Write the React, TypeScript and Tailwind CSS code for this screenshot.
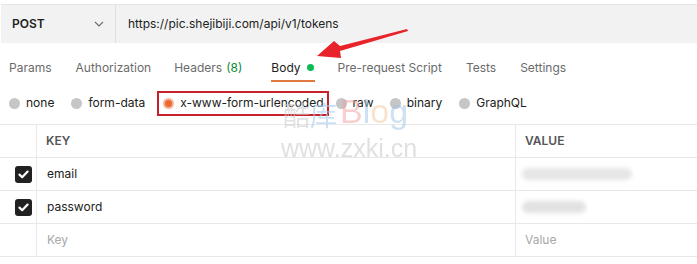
import React from "react";

const Check = () => (
  <div className="w-[17px] h-[17px] rounded-[3px] bg-[#212121] flex items-center justify-center">
    <svg width="11" height="9" viewBox="0 0 11 9">
      <path d="M1.5 4.6 L4.2 7.2 L9.6 1.6" fill="none" stroke="white" strokeWidth="2.2" strokeLinecap="round" strokeLinejoin="round" />
    </svg>
  </div>
);

const Radio = ({ label, active }: { label: string; active?: boolean }) => (
  <div className="flex items-center gap-[6px]">
    {active ? (
      <div className="w-[11px] h-[11px] rounded-full bg-[#f3b49a] flex items-center justify-center">
        <div className="w-[7px] h-[7px] rounded-full bg-[#ef6a2f]" />
      </div>
    ) : (
      <div className="w-[11px] h-[11px] rounded-full bg-[#c6c6c6]" />
    )}
    <span>{label}</span>
  </div>
);

export default function App() {
  return (
    <div
      className="relative w-[697px] h-[264px] bg-white overflow-hidden text-[12px] text-[#212121]"
      style={{ fontFamily: "Inter, 'Noto Sans', 'Noto Sans CJK SC', sans-serif" }}
    >
      <div className="pt-[4px] pl-[1px]">
        <div className="flex h-[39px] bg-[#f2f2f2] border-t border-[#e4e4e4]">
          <div className="w-[115px] flex items-center justify-between pl-[11px] pr-[11px] border-r border-[#e0e0e0]">
            <span className="font-semibold text-[12px] text-[#212121]">POST</span>
            <svg width="10" height="6" viewBox="0 0 10 6">
              <path d="M1 1 L5 5 L9 1" fill="none" stroke="#6b6b6b" strokeWidth="1.1" />
            </svg>
          </div>
          <div className="flex items-center pl-[12px] text-[12px] text-[#212121]">
            https://pic.shejibiji.com/api/v1/tokens
          </div>
        </div>
      </div>

      <div className="flex h-[39px] pl-[9px] pt-[10px] text-[12px] text-[#6b6b6b]">
        <div className="flex items-center mr-[24px]">Params</div>
        <div className="flex items-center mr-[23px]">Authorization</div>
        <div className="flex items-center mr-[29px]">
          Headers <span className="ml-[4px] text-[#0b8a3a]">(8)</span>
        </div>
        <div className="relative flex items-center mr-[24px] text-[#212121]">
          Body
          <span className="ml-[6px] w-[7px] h-[7px] rounded-full bg-[#0cbb52]" />
          <div className="absolute left-0 right-[-1px] bottom-[0px] h-[2px] bg-[#e0793f]" />
        </div>
        <div className="flex items-center mr-[24px]">Pre-request Script</div>
        <div className="flex items-center mr-[24px]">Tests</div>
        <div className="flex items-center">Settings</div>
      </div>

      <div className="flex items-center h-[42px] pl-[9px] text-[12px] text-[#212121]">
        <div className="mr-[17px]"><Radio label="none" /></div>
        <div className="mr-[12px]"><Radio label="form-data" /></div>
        <div className="mr-[7px] h-[25px] flex items-center pl-[4px] pr-[3px] border-2 border-[#c8202a]">
          <Radio label="x-www-form-urlencoded" active />
        </div>
        <div className="mr-[16px]"><Radio label="raw" /></div>
        <div className="mr-[17px]"><Radio label="binary" /></div>
        <div><Radio label="GraphQL" /></div>
      </div>

      <div className="border-t border-[#e8e8e8]">
        <div className="flex h-[33px] border-b border-[#e8e8e8]">
          <div className="w-[37px] border-r border-[#e8e8e8]" />
          <div className="w-[479px] border-r border-[#e8e8e8] flex items-center pl-[9px] font-semibold text-[12px] text-[#555]">KEY</div>
          <div className="flex-1 flex items-center pl-[9px] font-semibold text-[12px] text-[#555]">VALUE</div>
        </div>
        <div className="flex h-[33px] border-b border-[#e8e8e8]">
          <div className="w-[37px] border-r border-[#e8e8e8] flex items-center justify-end pr-[4px]"><Check /></div>
          <div className="w-[479px] border-r border-[#e8e8e8] flex items-center pl-[10px]">email</div>
          <div className="flex-1 flex items-center pl-[6px]">
            <div className="w-[110px] h-[12px] rounded-full bg-[#e6e6e6] blur-[2px]" />
          </div>
        </div>
        <div className="flex h-[33px] border-b border-[#e8e8e8]">
          <div className="w-[37px] border-r border-[#e8e8e8] flex items-center justify-end pr-[4px]"><Check /></div>
          <div className="w-[479px] border-r border-[#e8e8e8] flex items-center pl-[10px]">password</div>
          <div className="flex-1 flex items-center pl-[6px]">
            <div className="w-[64px] h-[12px] rounded-full bg-[#e2e2e2] blur-[2px]" />
          </div>
        </div>
        <div className="flex h-[33px] border-b border-[#e8e8e8]">
          <div className="w-[37px] border-r border-[#e8e8e8]" />
          <div className="w-[479px] border-r border-[#e8e8e8] flex items-center pl-[10px] text-[#a8a8a8]">Key</div>
          <div className="flex-1 flex items-center pl-[9px] text-[#a8a8a8]">Value</div>
        </div>
      </div>

      {/* watermark */}
      <div className="absolute left-[283px] top-[94px] flex items-end leading-none pointer-events-none select-none">
        <span className="text-[27px] text-[#cfcfcf] opacity-60" style={{ fontFamily: "'Noto Sans CJK SC', sans-serif" }}>酷</span>
        <span className="text-[27px] text-[#a9cdee] opacity-60" style={{ fontFamily: "'Noto Sans CJK SC', sans-serif" }}>库</span>
        <span className="ml-[3px] text-[34px] opacity-50" style={{ fontFamily: "'Liberation Sans', sans-serif" }}>
          <span className="text-[#f0a0a0]">B</span>
          <span className="text-[#9cc5e8]">l</span>
          <span className="text-[#f5c9a0]">o</span>
          <span className="text-[#9cc5e8]">g</span>
        </span>
      </div>
      <div
        className="absolute left-[281px] top-[136px] text-[25px] leading-none text-[#d4d4d4] opacity-70 pointer-events-none"
        style={{ fontFamily: "'Liberation Sans', sans-serif" }}
      >
        www.zxki.cn
      </div>

      {/* red arrow */}
      <svg className="absolute left-0 top-0 pointer-events-none" width="697" height="264">
        <path d="M407 29 L340 46 L334 41 L317 56 L341 58 L340 51 L408 31 Z" fill="#e8232a" />
      </svg>
    </div>
  );
}
